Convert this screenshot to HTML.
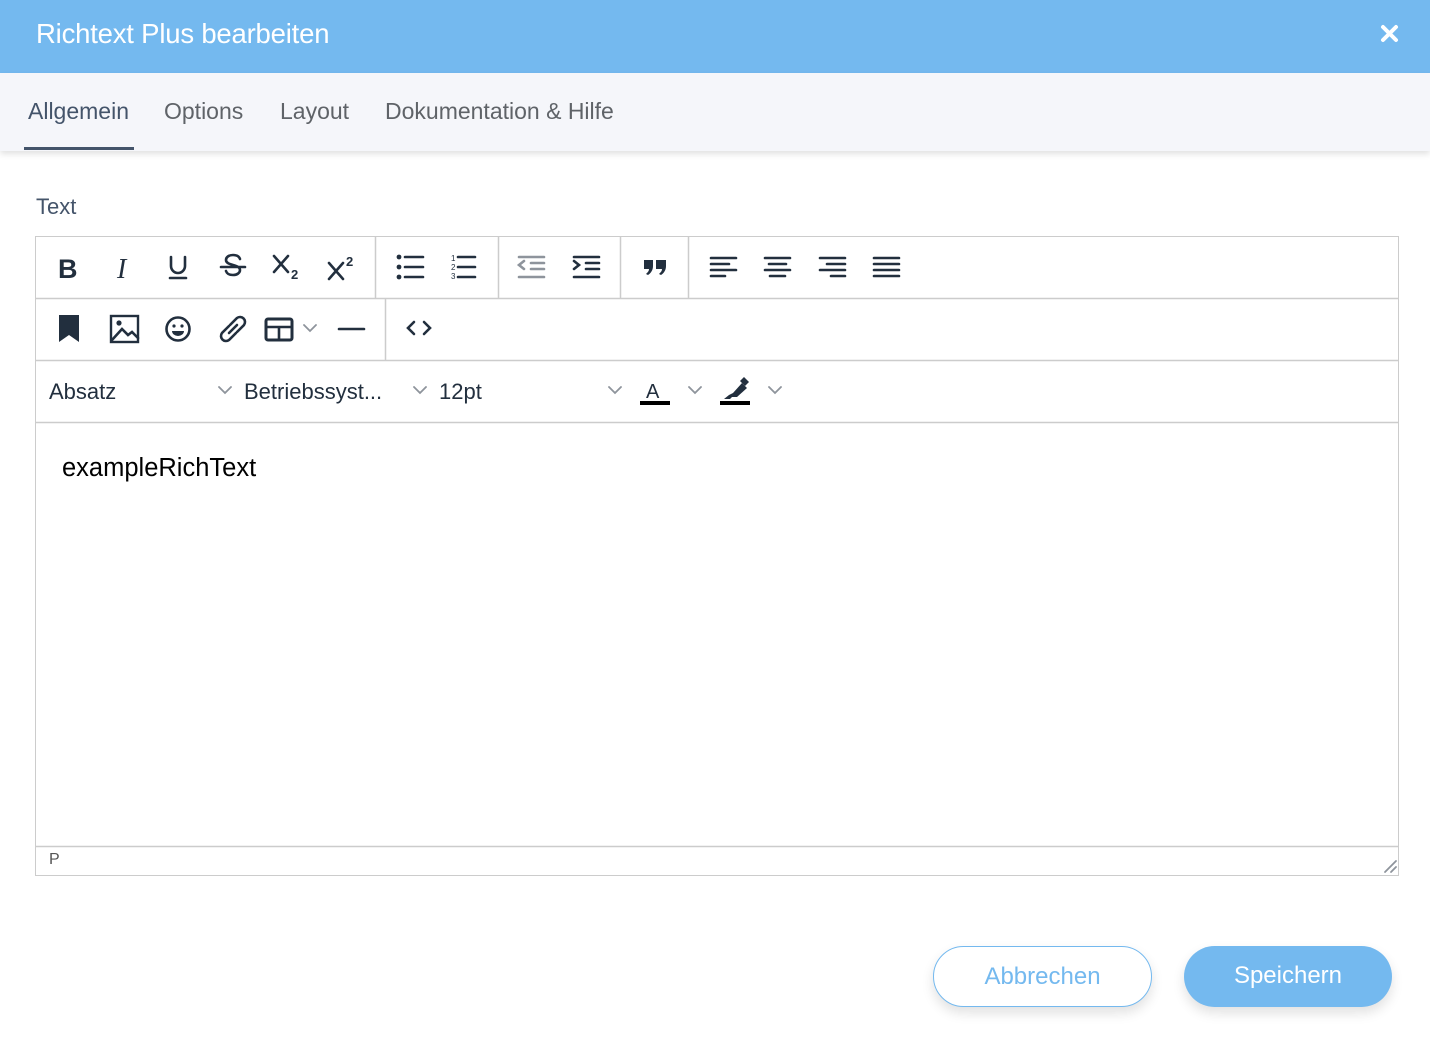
<!DOCTYPE html>
<html><head><meta charset="utf-8"><style>
*{margin:0;padding:0;box-sizing:border-box}
body{width:1430px;height:1046px;background:#fff;font-family:"Liberation Sans",sans-serif;position:relative;overflow:hidden}
.hdr{position:absolute;left:0;top:0;width:1430px;height:73px;background:#74b9ef}
.hdr h1{position:absolute;left:36px;top:18px;font-size:27.5px;font-weight:normal;color:#fff;letter-spacing:-0.2px}
.tabs{position:absolute;left:0;top:73px;width:1430px;height:78px;background:#f5f6fa;box-shadow:0 3px 6px rgba(0,0,0,0.12)}
.tab{position:absolute;top:25px;font-size:23px;color:#5f6368}
.ul{position:absolute;left:24px;top:74px;width:110px;height:3px;background:#44546a}
.lbl{position:absolute;left:36px;top:194px;font-size:22px;color:#44546a}
.ed{position:absolute;left:35px;top:236px;width:1364px;height:640px;border:1px solid #ccc}
.t{position:absolute;font-size:22px;color:#222f3e}
.btn{position:absolute;top:946px;height:61px;border-radius:31px;font-size:24px;text-align:center;line-height:59px;box-shadow:0 6px 12px rgba(0,0,0,0.12)}
</style></head><body>
<div class="hdr"><h1>Richtext Plus bearbeiten</h1>
<svg style="position:absolute;left:1380px;top:24px" width="19" height="19" viewBox="0 0 19 19"><path d="M3 3L16 16M16 3L3 16" stroke="#fff" stroke-width="4" stroke-linecap="round"/></svg></div>
<div class="tabs">
<div class="tab" style="left:28px;color:#44546a">Allgemein</div>
<div class="tab" style="left:164px">Options</div>
<div class="tab" style="left:280px">Layout</div>
<div class="tab" style="left:385px">Dokumentation &amp; Hilfe</div>
<div class="ul"></div></div>
<div class="lbl">Text</div>
<div class="ed"></div>
<svg style="position:absolute;left:0;top:0" width="1430" height="1046">
<g stroke="#ccc" stroke-width="1.5">
<line x1="35" y1="298.5" x2="1398" y2="298.5"/><line x1="35" y1="360.5" x2="1398" y2="360.5"/><line x1="35" y1="422.5" x2="1398" y2="422.5"/><line x1="35" y1="846.5" x2="1398" y2="846.5"/>
<line x1="375.5" y1="237" x2="375.5" y2="298"/><line x1="498.5" y1="237" x2="498.5" y2="298"/><line x1="620.5" y1="237" x2="620.5" y2="298"/><line x1="688.5" y1="237" x2="688.5" y2="298"/><line x1="385.5" y1="299" x2="385.5" y2="360"/>
</g>
<g fill="none" stroke="#222f3e" stroke-width="2.6" stroke-linecap="round">
<path d="M171 257v9a7 7 0 0 0 14 0v-9M170 278h16"/>
<path d="M221 267h24M240 259c-1-3-4-4-7-4c-4 0-7 2-7 5c0 6 14 4 14 10c0 3-3 5-7 5c-4 0-6-1-7-4"/>
<path d="M274 256l14 16M288 256l-14 16M329 263l14 16M343 263l-14 16"/>
<path d="M405 257h18M405 267h18M405 277h18"/>
<path d="M458 257h17M458 267h17M458 277h17"/>
<path d="M711 258h25M711 264h18M711 270h25M711 276h14"/>
<path d="M765 258h25M769 264h17M765 270h25M770 276h15"/>
<path d="M820 258h25M827 264h18M820 270h25M831 276h14"/>
<path d="M874 258h25M874 264h25M874 270h25M874 276h25"/>
<path d="M574 257h25M586 263h13M586 269h13M574 277h25M574 261l5 4l-5 4"/>
<path d="M229 326l-7 7a5 5 0 0 0 7 7l7-7M237 332l7-7a5 5 0 0 0-7-7l-7 7M229 333l8-8"/>
<path d="M339 329h25"/>
<path d="M414 322l-6 6l6 6M424 322l6 6l-6 6"/>
<circle cx="178" cy="329" r="11.5"/>
<rect x="111" y="316" width="27" height="26" stroke-width="2.4"/>
<path d="M112 340l10-11l6 6l4-3l6 6"/>
<rect x="266" y="319" width="26" height="21" rx="2" stroke-width="3"/>
<path d="M266 327h26M279 327v12"/>
</g>
<g fill="none" stroke="#8e949c" stroke-width="2.6" stroke-linecap="round">
<path d="M519 257h25M531 263h13M531 269h13M519 277h25M524 261l-5 4l5 4"/>
</g>
<g fill="#222f3e">
<circle cx="399" cy="257" r="2.4"/><circle cx="399" cy="267" r="2.4"/><circle cx="399" cy="277" r="2.4"/>
<text x="451" y="261" font-size="8" font-family="Liberation Sans">1</text><text x="451" y="270" font-size="8" font-family="Liberation Sans">2</text><text x="451" y="279" font-size="8" font-family="Liberation Sans">3</text>
<path d="M644 260h9v6c0 4-2 7-5 9l-2-1c2-2 3-3 3-5h-5zM656 260h10v6c0 4-2 7-5 9l-2-1c2-2 3-3 3-5h-6z"/>
<path d="M59 315h20v27l-10-7l-10 7z"/>
<circle cx="119" cy="323" r="2.6"/>
<circle cx="174" cy="326" r="1.6"/><circle cx="182" cy="326" r="1.6"/>
<path d="M172 331h12a6 5 0 0 1-12 0z"/>
<path d="M733 393l9-10l5 5l-10 9h-5l-2 2h-6l5-4z"/>
<path d="M740 381l4-4l5 5l-4 4z"/>
<rect x="640" y="401" width="30" height="4" fill="#000"/><rect x="720" y="401" width="30" height="4" fill="#000"/>
</g>
<g fill="none" stroke="#8e949c" stroke-width="1.8" stroke-linecap="round">
<path d="M304 325l6 6l6-6M219 387l6 6l6-6M414 387l6 6l6-6M609 387l6 6l6-6M689 387l6 6l6-6M769 387l6 6l6-6"/>
<path d="M1385 872l11-11M1391 872l5-5"/>
</g>
<text x="58" y="278" font-size="27" font-weight="bold" font-family="Liberation Sans" fill="#222f3e">B</text>
<text x="117" y="278" font-size="28" font-style="italic" font-family="Liberation Serif" fill="#222f3e">I</text>
<text x="291" y="279" font-size="13" font-weight="bold" font-family="Liberation Sans" fill="#222f3e">2</text>
<text x="346" y="266" font-size="13" font-weight="bold" font-family="Liberation Sans" fill="#222f3e">2</text>
<text x="646" y="398" font-size="20" font-family="Liberation Sans" fill="#222f3e">A</text>
</svg>
<div class="t" style="left:49px;top:379px">Absatz</div>
<div class="t" style="left:244px;top:379px">Betriebssyst...</div>
<div class="t" style="left:439px;top:379px">12pt</div>
<div class="t" style="left:62px;top:454px;font-size:25.5px;color:#000">exampleRichText</div>
<div class="t" style="left:49px;top:851px;font-size:16px;color:#555">P</div>
<div class="btn" style="left:933px;width:219px;border:1px solid #74b9ef;color:#74b9ef;background:#fff">Abbrechen</div>
<div class="btn" style="left:1184px;width:208px;background:#74b9ef;color:#fff">Speichern</div>
</body></html>
